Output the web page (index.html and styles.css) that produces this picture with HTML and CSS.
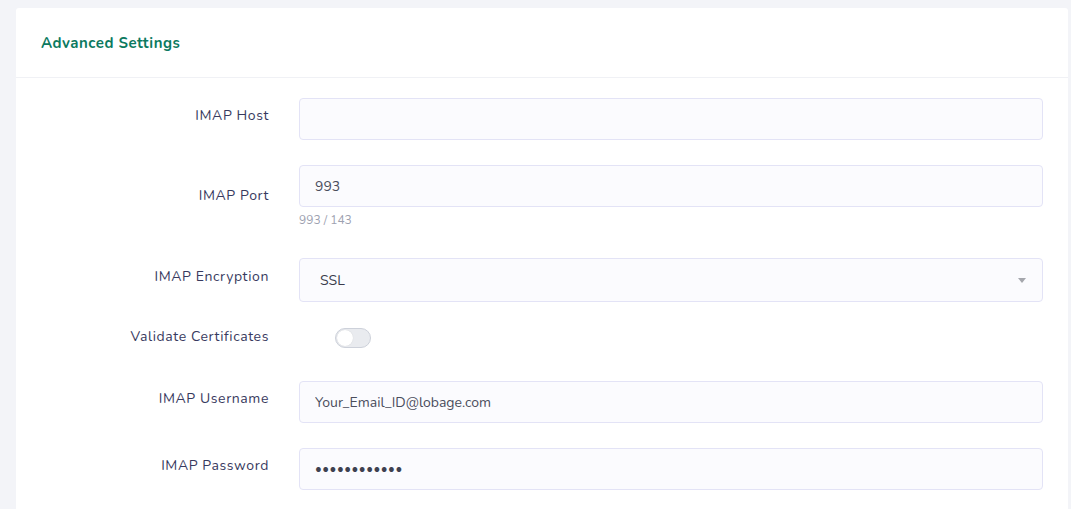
FILE: index.html
```html
<!DOCTYPE html>
<html lang="en">
<head>
<meta charset="utf-8">
<title>Advanced Settings</title>
<link rel="stylesheet" href="styles.css">
</head>
<body>
<div class="page">
  <section class="card">
    <header class="card-header">
      <h2 class="card-title">Advanced Settings</h2>
    </header>
    <div class="card-body">
      <div class="form-row row-host">
        <label class="form-label">IMAP Host</label>
        <div class="field"><input class="form-control" type="text" value=""></div>
      </div>
      <div class="form-row row-port">
        <label class="form-label">IMAP Port</label>
        <div class="field">
          <input class="form-control" type="text" value="993">
          <div class="help">993 / 143</div>
        </div>
      </div>
      <div class="form-row row-enc">
        <label class="form-label">IMAP Encryption</label>
        <div class="field">
          <div class="select"><span class="select-value">SSL</span><span class="caret"></span></div>
        </div>
      </div>
      <div class="form-row row-toggle">
        <label class="form-label">Validate Certificates</label>
        <div class="field"><span class="switch"><span class="knob"></span></span></div>
      </div>
      <div class="form-row row-user">
        <label class="form-label">IMAP Username</label>
        <div class="field"><input class="form-control" type="text" value="Your_Email_ID@lobage.com"></div>
      </div>
      <div class="form-row row-pass">
        <label class="form-label">IMAP Password</label>
        <div class="field"><input class="form-control pass" type="password" value="password1234"></div>
      </div>
    </div>
  </section>
</div>
</body>
</html>
```
FILE: styles.css
```css
html, body {
  margin: 0;
  padding: 0;
  height: 100%;
}
body {
  background: #f3f4f8;
  font-family: "Nunito", "Lato", "Open Sans", sans-serif;
  color: #3a3b5c;
  overflow: hidden;
}
.page {
  padding: 8px 3px 0 16px;
}
.card {
  background: #ffffff;
  border-radius: 3px;
  min-height: 520px;
}
.card-header {
  height: 69px;
  border-bottom: 1px solid #f0f1f5;
  display: flex;
  align-items: center;
  padding: 0 25px;
}
.card-title {
  margin: 0;
  font-size: 15px;
  font-weight: 700;
  letter-spacing: 0.5px;
  color: #0c7a5f;
}
.card-body {
  padding: 20px 25px 0 25px;
}
.form-row {
  display: grid;
  grid-template-columns: 228px 1fr;
  column-gap: 30px;
  align-items: center;
}
.form-label {
  text-align: right;
  font-size: 14px;
  line-height: 20px;
  letter-spacing: 0.6px;
  margin-bottom: 6px;
  margin-right: 0;
  color: #383a5e;
}
.row-host { margin-bottom: 25px; }
.row-port { margin-bottom: 29px; }
.row-enc { margin-bottom: 25px; }
.row-toggle { margin-bottom: 32px; height: 22px; }
.row-toggle .form-label { margin-bottom: 0; margin-top: -2px; }
.row-user { margin-bottom: 25px; }
.row-port .form-label { margin-bottom: 0; margin-top: -2px; }
.form-control {
  display: block;
  box-sizing: border-box;
  width: 100%;
  height: 42px;
  padding: 0 15px;
  background: #fbfbfe;
  border: 1px solid #e3e3f6;
  border-radius: 4px;
  font-family: inherit;
  font-size: 14px;
  color: #4a4d5c;
  outline: none;
}
.form-control.pass {
  font-size: 13px;
  letter-spacing: 0.5px;
  color: #3e4150;
}
.help {
  margin-top: 5px;
  font-size: 12px;
  line-height: 17px;
  color: #9da1b0;
}
.select {
  box-sizing: border-box;
  height: 44px;
  background: #fbfbfe;
  border: 1px solid #e3e3f6;
  border-radius: 4px;
  display: flex;
  align-items: center;
  padding: 0 16px 0 20px;
  font-size: 14px;
  color: #3a3b4c;
}
.select-value { flex: 1; }
.caret {
  width: 0;
  height: 0;
  border-left: 4px solid transparent;
  border-right: 4px solid transparent;
  border-top: 5px solid #a5a7ad;
}
.switch {
  display: block;
  box-sizing: border-box;
  margin-left: 36px;
  width: 36px;
  height: 20px;
  border-radius: 10px;
  background: #e9ebef;
  border: 1px solid #cdd1da;
  position: relative;
}
.knob {
  position: absolute;
  top: 1px;
  left: 1px;
  width: 16px;
  height: 16px;
  border-radius: 50%;
  background: #ffffff;
  box-shadow: 0 0 1px rgba(0,0,0,0.15);
}
```
